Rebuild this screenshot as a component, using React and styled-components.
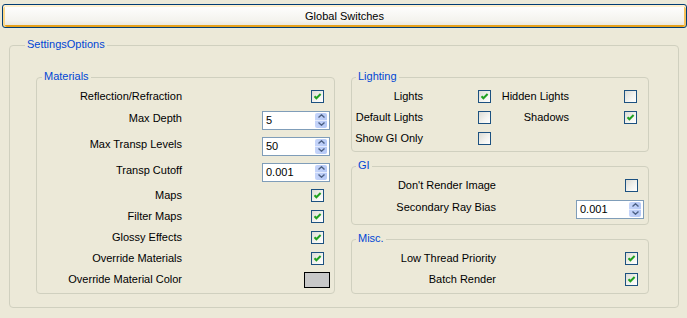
import React from 'react';
import styled, { createGlobalStyle } from 'styled-components';

const GlobalStyle = createGlobalStyle`
	html, body {
		margin: 0;
		padding: 0;
		background: #ece9d8;
	}
	body {
		font-family: 'Liberation Sans', Arial, sans-serif;
		font-size: 11px;
		color: #000;
	}
`;

const Page = styled.div`
	width: 687px;
	height: 318px;
	box-sizing: border-box;
	padding-top: 4px;
	overflow: hidden;
`;

// XP style button, drawn in its hot (hovered) state
const HeaderButton = styled.button`
	display: block;
	box-sizing: border-box;
	width: 685px;
	height: 24px;
	margin: 0 0 0 2px;
	border: 1px solid #003c74;
	border-radius: 3px;
	background: linear-gradient(#ffffff, #f4f3ee 70%, #e6e2d6);
	box-shadow: inset 0 2px #fff0cf, inset 2px 0 #fbd88a, inset -2px 0 #f5c25a, inset 0 -2px #e5a01a;
	font: 11px 'Liberation Sans', Arial, sans-serif;
	color: #000;
	padding: 0;
`;

const Group = styled.div`
	position: relative;
	box-sizing: border-box;
	border: 1px solid #d0d0bf;
	border-radius: 4px;
	padding: ${(p) => p.$pt ?? 8}px ${(p) => p.$pr ?? 4}px ${(p) => p.$pb ?? 2}px ${(p) => p.$pl ?? 0}px;
`;

const OuterGroup = styled(Group)`
	width: 670px;
	margin: 17px 0 0 9px;
	display: grid;
	grid-template-columns: 299px 298px;
	column-gap: 16px;
`;

const Caption = styled.span`
	position: absolute;
	top: -8px;
	left: ${(p) => p.$offset}px;
	padding: 0 2px;
	line-height: 13px;
	background: #ece9d8;
	color: #0046d5;
	white-space: nowrap;
`;

const Column = styled.div`
	display: flex;
	flex-direction: column;
	gap: 14px;
`;

const Row = styled.div`
	display: grid;
	grid-template-columns: ${(p) => p.$labelWidth}px 1fr 68px;
	align-items: center;
	height: ${(p) => (p.$tall ? 26 : 21)}px;
`;

const Label = styled.span`
	text-align: right;
	white-space: nowrap;
	line-height: 13px;
	margin-bottom: ${(p) => (p.$raised ? 4 : 0)}px;
`;

const Control = styled.div`
	grid-column: 3;
	justify-self: end;
	display: flex;
	padding-right: ${(p) => p.$pad ?? 0}px;
`;

const LightingGrid = styled.div`
	display: grid;
	grid-template-columns: 71px 68px 78px 68px;
	grid-auto-rows: 21px;
	align-items: center;
`;

const CheckCell = styled.div`
	justify-self: end;
	display: flex;
`;

const Box = styled.span`
	display: inline-flex;
	box-sizing: border-box;
	width: 13px;
	height: 13px;
	border: 1px solid #1c5180;
	background: linear-gradient(135deg, #dcdcd5, #f4f4f0 60%, #ffffff);
`;

const Swatch = styled.span`
	display: block;
	box-sizing: border-box;
	width: 26px;
	height: 16px;
	border: 1px solid #000;
	background: #c8c8c8;
`;

const SpinBox = styled.div`
	display: flex;
	align-items: center;
	box-sizing: border-box;
	width: 68px;
	height: 19px;
	padding: 0 2px 0 3px;
	border: 1px solid #7f9db9;
	background: #fff;
`;

const SpinValue = styled.span`
	flex: 1;
	line-height: 13px;
`;

const SpinButtons = styled.div`
	display: flex;
	flex-direction: column;
	width: 12px;
	height: 15px;
	border-radius: 2px;
	overflow: hidden;
	background: linear-gradient(90deg, #c6d5fa, #b4c8f6);
`;

const SpinHalf = styled.div`
	flex: 1;
	display: flex;
	align-items: center;
	justify-content: center;
	${(p) => p.$top && 'border-bottom: 1px solid #e3ebfd;'}
`;

const Check = ({ checked }) => (
	<Box>
		{checked && (
			<svg width='11' height='11' viewBox='0 0 11 11'>
				<path d='M2.5 5.2 L4.4 7.2 L8.6 3' fill='none' stroke='#21a121' strokeWidth='2' />
			</svg>
		)}
	</Box>
);

const Arrow = ({ up }) => (
	<svg width='7' height='4' viewBox='0 0 7 4'>
		<path d={up ? 'M0.5 3.5 L3.5 0.8 L6.5 3.5' : 'M0.5 0.5 L3.5 3.2 L6.5 0.5'} fill='none' stroke='#4d6185' strokeWidth='1.4' />
	</svg>
);

const Spinner = ({ value }) => (
	<SpinBox>
		<SpinValue>{value}</SpinValue>
		<SpinButtons>
			<SpinHalf $top>
				<Arrow up />
			</SpinHalf>
			<SpinHalf>
				<Arrow />
			</SpinHalf>
		</SpinButtons>
	</SpinBox>
);

// One label + control line of a settings group
const Setting = ({ label, type, value, labelWidth }) => {
	const tall = type === 'spin';
	return (
		<Row $labelWidth={labelWidth} $tall={tall}>
			<Label $raised={tall}>{label}</Label>
			{type === 'check' && (
				<Control $pad={6}>
					<Check checked={value} />
				</Control>
			)}
			{type === 'spin' && (
				<Control>
					<Spinner value={value} />
				</Control>
			)}
			{type === 'color' && (
				<Control>
					<Swatch />
				</Control>
			)}
		</Row>
	);
};

const materials = [
	{ label: 'Reflection/Refraction', type: 'check', value: true },
	{ label: 'Max Depth', type: 'spin', value: '5' },
	{ label: 'Max Transp Levels', type: 'spin', value: '50' },
	{ label: 'Transp Cutoff', type: 'spin', value: '0.001' },
	{ label: 'Maps', type: 'check', value: true },
	{ label: 'Filter Maps', type: 'check', value: true },
	{ label: 'Glossy Effects', type: 'check', value: true },
	{ label: 'Override Materials', type: 'check', value: true },
	{ label: 'Override Material Color', type: 'color' },
];

const gi = [
	{ label: "Don't Render Image", type: 'check', value: false },
	{ label: 'Secondary Ray Bias', type: 'spin', value: '0.001' },
];

const misc = [
	{ label: 'Low Thread Priority', type: 'check', value: true },
	{ label: 'Batch Render', type: 'check', value: true },
];

const App = () => {
	return (
		<Page>
			<GlobalStyle />
			<HeaderButton type='button'>Global Switches</HeaderButton>

			<OuterGroup $pt={31} $pr={29} $pb={13} $pl={26}>
				<Caption $offset={15}>SettingsOptions</Caption>

				{/* Materials */}
				<Group $pb={3}>
					<Caption $offset={5}>Materials</Caption>
					{materials.map((item) => (
						<Setting key={item.label} labelWidth={145} {...item} />
					))}
				</Group>

				<Column>
					{/* Lighting */}
					<Group $pb={2}>
						<Caption $offset={4}>Lighting</Caption>
						<LightingGrid>
							<Label>Lights</Label>
							<CheckCell>
								<Check checked />
							</CheckCell>
							<Label>Hidden Lights</Label>
							<CheckCell>
								<Check />
							</CheckCell>

							<Label>Default Lights</Label>
							<CheckCell>
								<Check />
							</CheckCell>
							<Label>Shadows</Label>
							<CheckCell>
								<Check checked />
							</CheckCell>

							<Label>Show GI Only</Label>
							<CheckCell>
								<Check />
							</CheckCell>
						</LightingGrid>
					</Group>

					{/* GI */}
					<Group $pb={2}>
						<Caption $offset={4}>GI</Caption>
						{gi.map((item) => (
							<Setting key={item.label} labelWidth={144} {...item} />
						))}
					</Group>

					{/* Misc */}
					<Group $pb={3}>
						<Caption $offset={4}>Misc.</Caption>
						{misc.map((item) => (
							<Setting key={item.label} labelWidth={144} {...item} />
						))}
					</Group>
				</Column>
			</OuterGroup>
		</Page>
	);
};

export default App;
